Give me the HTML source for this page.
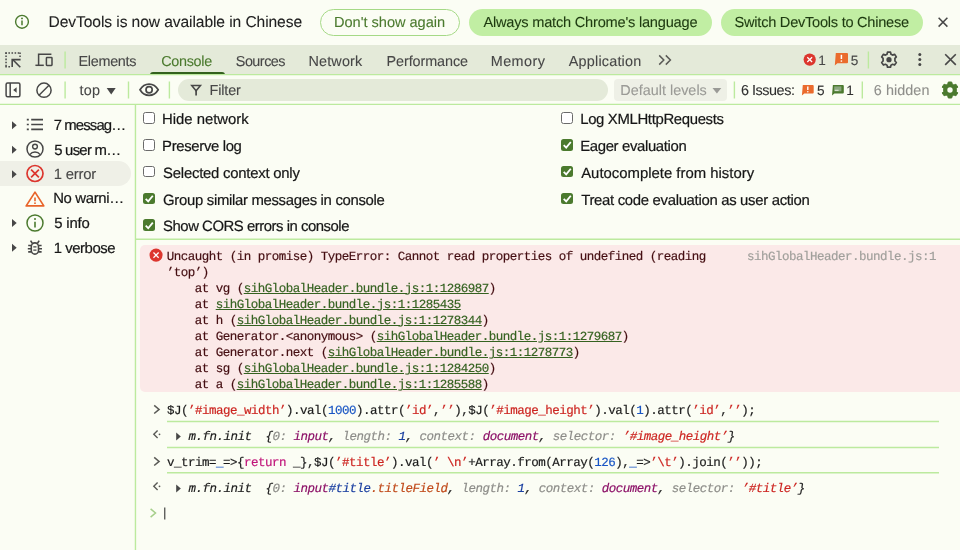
<!DOCTYPE html>
<html>
<head>
<meta charset="utf-8">
<style>
*{box-sizing:border-box;margin:0;padding:0}
html,body{width:960px;height:550px;overflow:hidden;background:#fbfdf4;font-family:"Liberation Sans",sans-serif;color:#1f1f1f;text-rendering:geometricPrecision}
.tx{position:absolute;white-space:nowrap;-webkit-text-stroke:0.2px}
.ab{position:absolute}
svg{position:absolute;overflow:visible}
.pill{position:absolute;top:9px;height:27px;border-radius:13.5px}
.pill.o{border:1px solid #a5d986;background:#fbfdf4}
.pill.f{background:#c1eea3}
#tabbar{position:absolute;left:0;top:45px;width:960px;height:30px;background:#e4ead9}
.vd{position:absolute;width:1.400px;background:#b9e89b;margin-left:-0.200px}
.hd{position:absolute;height:1px;background:#b5e696}
.cb{position:absolute;width:11.8px;height:11.8px;border:1px solid #6a6a6a;border-radius:2.5px;background:#fff}
.cbon{position:absolute;width:11.8px;height:11.8px;border-radius:2.5px;background:#4b7a2e}
.m{position:absolute;font-family:"Liberation Mono",monospace;font-size:12.5px;letter-spacing:-0.5px;white-space:pre;line-height:16.100px;color:#1a1a1a;-webkit-text-stroke:0.180px;text-rendering:geometricPrecision}
.m i{font-style:italic}
.lk{color:#356220;text-decoration:underline;text-decoration-thickness:1px;text-underline-offset:1.300px}
.r{color:#cc2420}.b{color:#1a56c4}.p{color:#8b0f66}.g{color:#8c8c88}.k{color:#c0157a}.o{color:#c04a1a}.n{color:#1a3fa0}
</style>
</head>
<body>
<div id="root" style="position:absolute;left:0;top:0;width:960px;height:550px;will-change:transform">
<!-- infobar -->
<div class="pill o" style="left:320px;width:140px"></div>
<div class="pill f" style="left:469px;width:243px"></div>
<div class="pill f" style="left:721px;width:202px"></div>
<!-- tabbar -->
<div id="tabbar"></div>
<div class="ab" style="left:150px;top:72px;width:75px;height:3px;background:#33611d;border-radius:3px 3px 0 0"></div>
<!-- toolbar -->
<div class="ab" style="left:178px;top:79px;width:430px;height:22px;border-radius:11px;background:#e4ead9"></div>
<div class="ab" style="left:614px;top:79px;width:113px;height:22px;border-radius:4px;background:#eef0e6"></div>
<!-- sidebar -->
<div class="ab" style="left:0;top:161px;width:131px;height:25px;background:#eff0e7;border-radius:0 12.5px 12.5px 0"></div>
<!-- settings -->
<div class="cb" style="left:143.2px;top:112px"></div>
<div class="cb" style="left:143.2px;top:138.8px"></div>
<div class="cb" style="left:143.2px;top:165.6px"></div>
<div class="cbon" style="left:143.2px;top:192.6px"></div>
<div class="cbon" style="left:143.2px;top:219.4px"></div>
<div class="cb" style="left:561.2px;top:112px"></div>
<div class="cbon" style="left:561.2px;top:138.8px"></div>
<div class="cbon" style="left:561.2px;top:165.6px"></div>
<div class="cbon" style="left:561.2px;top:192.6px"></div>

<!-- console -->
<div class="ab" style="left:140px;top:245px;width:820px;height:147px;background:#fbe9e8;border-radius:5px 0 0 5px"></div>
<div class="m" style="left:166.7px;top:248.6px;color:#440d11">Uncaught (in promise) TypeError: Cannot read properties of undefined (reading
’top’)
    at vg (<span class="lk">sihGlobalHeader.bundle.js:1:1286987</span>)
    at <span class="lk">sihGlobalHeader.bundle.js:1:1285435</span>
    at h (<span class="lk">sihGlobalHeader.bundle.js:1:1278344</span>)
    at Generator.&lt;anonymous&gt; (<span class="lk">sihGlobalHeader.bundle.js:1:1279687</span>)
    at Generator.next (<span class="lk">sihGlobalHeader.bundle.js:1:1278773</span>)
    at sg (<span class="lk">sihGlobalHeader.bundle.js:1:1284250</span>)
    at a (<span class="lk">sihGlobalHeader.bundle.js:1:1285588</span>)</div>
<div class="m" style="left:747px;top:248.6px;color:#a09f9b">sihGlobalHeader.bundle.js:1</div>
<div class="m" style="left:167px;top:402.8px">$J(<span class="r">’#image_width’</span>).val(<span class="b">1000</span>).attr(<span class="r">’id’</span>,<span class="r">’’</span>),$J(<span class="r">’#image_height’</span>).val(<span class="b">1</span>).attr(<span class="r">’id’</span>,<span class="r">’’</span>);</div>
<div class="m" style="left:188.5px;top:428.8px"><i>m.fn.init  {<span class="g">0: </span><span class="p">input</span>, <span class="g">length: </span><span class="n">1</span>, <span class="g">context: </span><span class="p">document</span>, <span class="g">selector: </span><span class="r">’#image_height’</span>}</i></div>
<div class="m" style="left:167px;top:454.8px">v_trim=<span class="b">_</span>=&gt;{<span class="k">return</span> _},$J(<span class="r">’#title’</span>).val(<span class="r">’ \n’</span>+Array.from(Array(<span class="b">126</span>),<span class="b">_</span>=&gt;<span class="r">’\t’</span>).join(<span class="r">’’</span>));</div>
<div class="m" style="left:188.5px;top:480.8px"><i>m.fn.init  {<span class="g">0: </span><span class="p">input</span><span class="n">#title</span><span class="o">.titleField</span>, <span class="g">length: </span><span class="n">1</span>, <span class="g">context: </span><span class="p">document</span>, <span class="g">selector: </span><span class="r">’#title’</span>}</i></div>

<div class="tx" style="left:48.60px;top:14px;line-height:17px;height:17px;font-size:15.6px;letter-spacing:-0.088px;color:#1f1f1f;-webkit-text-stroke:0.100px">DevTools is now available in Chinese</div>
<div class="tx" style="left:334.00px;top:15px;line-height:16px;height:16px;font-size:14.6px;letter-spacing:-0.025px;color:#4b7a2e;-webkit-text-stroke:0.100px">Don&#x27;t show again</div>
<div class="tx" style="left:483.40px;top:15px;line-height:16px;height:16px;font-size:14.6px;letter-spacing:-0.209px;color:#1e3a10;-webkit-text-stroke:0.100px">Always match Chrome&#x27;s language</div>
<div class="tx" style="left:734.60px;top:15px;line-height:16px;height:16px;font-size:14.6px;letter-spacing:-0.255px;color:#1e3a10;-webkit-text-stroke:0.100px">Switch DevTools to Chinese</div>
<div class="tx" style="left:78.50px;top:54px;line-height:16px;height:16px;font-size:14.4px;letter-spacing:-0.284px;color:#474747;-webkit-text-stroke:0.100px">Elements</div>
<div class="tx" style="left:161.20px;top:54px;line-height:16px;height:16px;font-size:14.4px;letter-spacing:-0.299px;color:#4b7a2e;-webkit-text-stroke:0.100px">Console</div>
<div class="tx" style="left:235.80px;top:54px;line-height:16px;height:16px;font-size:14.4px;letter-spacing:-0.516px;color:#474747;-webkit-text-stroke:0.100px">Sources</div>
<div class="tx" style="left:308.50px;top:54px;line-height:16px;height:16px;font-size:14.4px;letter-spacing:0.153px;color:#474747;-webkit-text-stroke:0.100px">Network</div>
<div class="tx" style="left:386.50px;top:54px;line-height:16px;height:16px;font-size:14.4px;letter-spacing:-0.088px;color:#474747;-webkit-text-stroke:0.100px">Performance</div>
<div class="tx" style="left:490.70px;top:54px;line-height:16px;height:16px;font-size:14.4px;letter-spacing:0.465px;color:#474747;-webkit-text-stroke:0.100px">Memory</div>
<div class="tx" style="left:568.80px;top:54px;line-height:16px;height:16px;font-size:14.4px;letter-spacing:0.200px;color:#474747;-webkit-text-stroke:0.100px">Application</div>
<div class="tx" style="left:818.20px;top:53px;line-height:15px;height:15px;font-size:13.6px;letter-spacing:0.000px;color:#474747;-webkit-text-stroke:0.100px">1</div>
<div class="tx" style="left:850.70px;top:53px;line-height:15px;height:15px;font-size:13.6px;letter-spacing:0.000px;color:#474747;-webkit-text-stroke:0.100px">5</div>
<div class="tx" style="left:79.40px;top:83px;line-height:16px;height:16px;font-size:14.4px;letter-spacing:0.299px;color:#474747;-webkit-text-stroke:0.100px">top</div>
<div class="tx" style="left:209.50px;top:83px;line-height:16px;height:16px;font-size:14.4px;letter-spacing:-0.117px;color:#474747;-webkit-text-stroke:0.100px">Filter</div>
<div class="tx" style="left:620.30px;top:83px;line-height:16px;height:16px;font-size:14.4px;letter-spacing:0.008px;color:#9a9a96;-webkit-text-stroke:0.100px">Default levels</div>
<div class="tx" style="left:741.00px;top:83px;line-height:16px;height:16px;font-size:14.4px;letter-spacing:-0.462px;color:#303030;-webkit-text-stroke:0.100px">6 Issues:</div>
<div class="tx" style="left:817.00px;top:83px;line-height:15px;height:15px;font-size:13.6px;letter-spacing:0.000px;color:#303030;-webkit-text-stroke:0.100px">5</div>
<div class="tx" style="left:846.20px;top:83px;line-height:15px;height:15px;font-size:13.6px;letter-spacing:0.000px;color:#303030;-webkit-text-stroke:0.100px">1</div>
<div class="tx" style="left:873.80px;top:83px;line-height:16px;height:16px;font-size:14.4px;letter-spacing:0.055px;color:#8f8f8b;-webkit-text-stroke:0.100px">6 hidden</div>
<div class="tx" style="left:53.70px;top:118px;line-height:16px;height:16px;font-size:14.9px;letter-spacing:-0.882px;color:#161616">7 messag…</div>
<div class="tx" style="left:54.20px;top:143px;line-height:16px;height:16px;font-size:14.9px;letter-spacing:-0.741px;color:#161616">5 user m…</div>
<div class="tx" style="left:53.70px;top:167px;line-height:16px;height:16px;font-size:14.9px;letter-spacing:-0.216px;color:#474747;-webkit-text-stroke:0.100px">1 error</div>
<div class="tx" style="left:53.20px;top:191px;line-height:16px;height:16px;font-size:14.9px;letter-spacing:-0.344px;color:#161616">No warni…</div>
<div class="tx" style="left:54.20px;top:216px;line-height:16px;height:16px;font-size:14.9px;letter-spacing:-0.169px;color:#161616">5 info</div>
<div class="tx" style="left:53.70px;top:241px;line-height:16px;height:16px;font-size:14.9px;letter-spacing:-0.439px;color:#161616">1 verbose</div>
<div class="tx" style="left:162.10px;top:112px;line-height:16px;height:16px;font-size:14.9px;letter-spacing:-0.032px;color:#161616">Hide network</div>
<div class="tx" style="left:162.10px;top:139px;line-height:16px;height:16px;font-size:14.9px;letter-spacing:-0.346px;color:#161616">Preserve log</div>
<div class="tx" style="left:163.10px;top:166px;line-height:16px;height:16px;font-size:14.9px;letter-spacing:-0.240px;color:#161616">Selected context only</div>
<div class="tx" style="left:163.10px;top:193px;line-height:16px;height:16px;font-size:14.9px;letter-spacing:-0.311px;color:#161616">Group similar messages in console</div>
<div class="tx" style="left:163.10px;top:219px;line-height:16px;height:16px;font-size:14.9px;letter-spacing:-0.471px;color:#161616">Show CORS errors in console</div>
<div class="tx" style="left:580.20px;top:112px;line-height:16px;height:16px;font-size:14.9px;letter-spacing:-0.337px;color:#161616">Log XMLHttpRequests</div>
<div class="tx" style="left:580.20px;top:139px;line-height:16px;height:16px;font-size:14.9px;letter-spacing:-0.345px;color:#161616">Eager evaluation</div>
<div class="tx" style="left:581.20px;top:166px;line-height:16px;height:16px;font-size:14.9px;letter-spacing:-0.001px;color:#161616">Autocomplete from history</div>
<div class="tx" style="left:581.20px;top:193px;line-height:16px;height:16px;font-size:14.9px;letter-spacing:-0.309px;color:#161616">Treat code evaluation as user action</div>
<svg width="960" height="550" style="left:0;top:0" viewBox="0 0 960 550" fill="none" stroke-linecap="butt">
<!-- divider lines -->
<g stroke="#bcea9e" stroke-width="1.400">
<path d="M0 74.600H960M0 104.400H960M136 239.300H960"/>
<path d="M135.450 105V550"/>
<path d="M65.100 51.400V68.600M868.400 51.400V68.600"/>
<path d="M65.100 81.400V98.600M128.500 81.400V98.600M169.400 81.400V98.600M734.400 81.400V98.600M862.300 81.400V98.600"/>
<path d="M167 421.500H939M167 447.500H939M167 472.700H939"/>
</g>
<!-- checkmarks -->
<g stroke="#fff" stroke-width="1.8" fill="none">
<path d="M145.7 198.9l2.5 2.5 4.6-5.6"/>
<path d="M145.7 225.7l2.5 2.5 4.6-5.6"/>
<path d="M563.7 145.1l2.5 2.5 4.6-5.6"/>
<path d="M563.7 171.9l2.5 2.5 4.6-5.6"/>
<path d="M563.7 198.9l2.5 2.5 4.6-5.6"/>
</g>
<!-- infobar info icon -->
<circle cx="22" cy="21.8" r="6.4" stroke="#4b7a2e" stroke-width="1.4"/>
<path d="M22 20.6v4.6" stroke="#4b7a2e" stroke-width="1.5"/>
<circle cx="22" cy="18.4" r="0.95" fill="#4b7a2e"/>
<!-- infobar close -->
<path d="M938.6 17.8l8.8 8.8M947.4 17.8l-8.8 8.8" stroke="#474747" stroke-width="1.5"/>
<!-- inspect icon -->
<g stroke="#474747" stroke-width="1.5">
<path d="M5.3 53.1H20.8" stroke-dasharray="1.55 1.55"/>
<path d="M6.05 52.4V67.6" stroke-dasharray="1.55 1.55" stroke-dashoffset="0"/>
<path d="M20.05 52.4V57.4" stroke-dasharray="1.55 1.55"/>
<path d="M5.3 66.85H10.3" stroke-dasharray="1.55 1.55"/>
<path d="M20.3 67.2L12.9 59.8" stroke-width="1.6"/>
<path d="M12.2 67V59.6H20.6" stroke-width="1.6"/>
</g>
<!-- device icon -->
<g stroke="#474747" stroke-width="1.5">
<path d="M35.4 65.3H43.8"/>
<path d="M38.6 65.3V54.2H51.4"/>
<rect x="46.4" y="57.6" width="5.6" height="7.8" rx="0.6"/>
</g>
<!-- more tabs chevrons -->
<path d="M659.2 55.4l4.6 4.6-4.6 4.6M665.8 55.4l4.6 4.6-4.6 4.6" stroke="#5a5a56" stroke-width="1.5"/>
<!-- error count icon -->
<circle cx="809.7" cy="59.6" r="6.1" fill="#dc362e"/>
<path d="M807.300 57.200l4.800 4.800M812.100 57.200l-4.800 4.800" stroke="#fff" stroke-width="1.250"/>
<!-- issue icon orange (tabbar) -->
<path d="M835.8 53h11.2a1 1 0 0 1 1 1v8.2a1 1 0 0 1-1 1h-9.6l-2.6 2.4z" fill="#ea6b2d"/>
<path d="M841.4 54.8v4.2" stroke="#fff" stroke-width="1.5"/><circle cx="841.4" cy="61" r="0.85" fill="#fff"/>
<!-- gear outline -->
<g transform="translate(889 59.700) scale(0.940)">
<path d="M-1.600 -8h3.200l.5 2.200 1.700.9 2.100-.8 1.900 2.700-1.500 1.600v2.800l1.500 1.600-1.900 2.700-2.100-.8-1.700.9-.5 2.200h-3.200l-.5-2.200-1.700-.9-2.100.8-1.900-2.700 1.500-1.600v-2.800l-1.500-1.600 1.900-2.700 2.100.8 1.700-.9z" stroke="#474747" stroke-width="1.800" stroke-linejoin="round"/>
<circle r="2.800" fill="#474747"/>
</g>
<!-- kebab -->
<circle cx="919.8" cy="54.6" r="1.5" fill="#474747"/><circle cx="919.8" cy="59.6" r="1.5" fill="#474747"/><circle cx="919.8" cy="64.5" r="1.5" fill="#474747"/>
<!-- close devtools -->
<path d="M945.2 54.3l10.6 10.6M955.8 54.3l-10.6 10.6" stroke="#474747" stroke-width="1.6"/>
<!-- sidebar toggle -->
<g stroke="#474747" stroke-width="1.5">
<rect x="6.1" y="83.1" width="13.8" height="13.6" rx="1.5"/>
<path d="M10.2 83.1V96.7"/>
</g>
<path d="M16.6 87.2v5.6l-3.4-2.8z" fill="#474747"/>
<!-- clear -->
<circle cx="44" cy="90.2" r="7.1" stroke="#474747" stroke-width="1.5"/>
<path d="M39 95.2L49 85.2" stroke="#474747" stroke-width="1.5"/>
<!-- top dropdown triangle -->
<path d="M106.700 88h9l-4.500 6.400z" fill="#474747"/>
<!-- eye -->
<path d="M140 89.800c2.300-3.900 5.500-5.600 9.100-5.600s6.800 1.700 9.100 5.600c-2.300 3.900-5.500 5.600-9.100 5.600s-6.800-1.700-9.100-5.600z" stroke="#474747" stroke-width="1.700"/>
<circle cx="149.100" cy="89.800" r="3.100" stroke="#474747" stroke-width="1.700"/>
<!-- funnel -->
<path d="M191.700 85.500h8.800l-4.400 5.300z" stroke="#474747" stroke-width="1.500" stroke-linejoin="miter"/>
<path d="M196.100 90.200v5.200" stroke="#474747" stroke-width="1.700"/>
<!-- default levels triangle -->
<path d="M712.500 88h8.800l-4.400 5.500z" fill="#9a9a96"/>
<!-- issue icon orange (toolbar) -->
<path d="M802.8 85h10a.9.9 0 0 1 .9.900v6.700a.9.900 0 0 1-.900.900h-8.500l-2.400 2.100z" fill="#ea6b2d"/>
<path d="M807.800 86.500v3.500" stroke="#fff" stroke-width="1.400"/><circle cx="807.800" cy="91.800" r="0.800" fill="#fff"/>
<!-- issue icon green (toolbar) -->
<path d="M832.900 85h10a.9.900 0 0 1 .900.900v6.700a.9.900 0 0 1-.900.900h-8.500l-2.400 2.100z" fill="#4b7a2e"/>
<rect x="834.200" y="86.400" width="7.200" height="4.900" fill="#8aa67d"/>
<path d="M834.800 90.300h3.800" stroke="#e6eedf" stroke-width="1"/>
<!-- green gear filled -->
<g transform="translate(950 90)">
<path d="M-1.700 -8h3.400l.5 2.100 1.700.9 2-.8 1.900 2.900-1.500 1.500v2.800l1.500 1.500-1.900 2.900-2-.8-1.700.9-.5 2.100h-3.400l-.5-2.100-1.700-.9-2 .8-1.900-2.900 1.500-1.500v-2.800l-1.500-1.500 1.900-2.900 2 .8 1.700-.9z" fill="#4b7a2e" stroke="#4b7a2e" stroke-width="1" stroke-linejoin="round"/>
<circle r="2.700" fill="#fbfdf4"/>
</g>
<!-- sidebar expand triangles -->
<g fill="#474747">
<path d="M12 121.200l4.700 4.000-4.700 4.000z"/>
<path d="M12 145.700l4.700 4.000-4.700 4.000z"/>
<path d="M12 170.200l4.700 4.000-4.700 4.000z"/>
<path d="M12 219l4.700 4.000-4.700 4.000z"/>
<path d="M12 243.700l4.700 4.000-4.700 4.000z"/>
</g>
<!-- list icon -->
<g stroke="#474747" stroke-width="1.600">
<path d="M26.800 119.600h2M26.800 124.500h2M26.800 129.400h2M31.200 119.600h11.800M31.200 124.500h11.800M31.200 129.400h11.800"/>
</g>
<!-- user icon -->
<circle cx="35" cy="149" r="8" stroke="#474747" stroke-width="1.500"/>
<circle cx="35" cy="146.600" r="2.400" stroke="#474747" stroke-width="1.400"/>
<path d="M29.800 154.600c1.400-1.900 3.200-2.600 5.200-2.600s3.800.7 5.200 2.600" stroke="#474747" stroke-width="1.400"/>
<!-- error outline icon -->
<circle cx="35" cy="173.500" r="8" stroke="#dc362e" stroke-width="1.700"/>
<path d="M31.100 169.600l7.800 7.800M38.900 169.600l-7.800 7.800" stroke="#dc362e" stroke-width="1.700"/>
<!-- warning triangle -->
<path d="M35 192.100l8.800 13.800h-17.600z" stroke="#e8642a" stroke-width="1.700" stroke-linejoin="round"/>
<path d="M35 197.400v3.800" stroke="#e8642a" stroke-width="1.600"/><circle cx="35" cy="203.200" r="0.900" fill="#e8642a"/>
<!-- info icon -->
<circle cx="35" cy="223" r="8" stroke="#4b7a2e" stroke-width="1.500"/>
<path d="M35 221.800v5.600" stroke="#4b7a2e" stroke-width="1.600"/><circle cx="35" cy="219" r="1" fill="#4b7a2e"/>
<!-- bug icon -->
<g stroke="#474747" stroke-width="1.600" fill="none">
<rect x="31.300" y="242.900" width="7.200" height="11.200" rx="3.600"/>
<path d="M32.300 243.300l-1.700-2.700M37.500 243.300l1.700-2.700M28.200 245.500h3M38.600 245.500h3M27.800 248.700h3.400M38.600 248.700h3.400M28.200 251.900h3M38.600 251.900h3"/>
<path d="M33.300 246.900h3.200M33.300 250.100h3.200" stroke-width="1.200"/>
</g>
<!-- console error icon -->
<circle cx="156.050" cy="255.100" r="6.550" fill="#dc362e"/>
<path d="M153.450 252.500l5.200 5.200M158.650 252.500l-5.200 5.200" stroke="#fff" stroke-width="1.250"/>
<!-- console chevrons -->
<path d="M154.200 405.300l4.900 4.100-4.900 4.100" stroke="#5a5a56" stroke-width="1.500"/>
<path d="M154.200 457.300l4.900 4.100-4.900 4.100" stroke="#5a5a56" stroke-width="1.500"/>
<path d="M150.600 508.900l4.900 4.100-4.900 4.100" stroke="#a5cf8a" stroke-width="1.500"/>
<!-- return icons -->
<path d="M157.600 430.600l-3.800 3.700 3.800 3.700" stroke="#5a5a56" stroke-width="1.400"/><circle cx="159.500" cy="434.300" r="0.900" fill="#5a5a56"/>
<path d="M157.600 482.600l-3.800 3.700 3.800 3.700" stroke="#5a5a56" stroke-width="1.400"/><circle cx="159.500" cy="486.300" r="0.900" fill="#5a5a56"/>
<!-- expand triangles -->
<path d="M176.200 432.400l4.600 4-4.600 4z" fill="#474747"/>
<path d="M176.200 484.400l4.600 4-4.600 4z" fill="#474747"/>
<!-- cursor -->
<path d="M164.800 507.500v12" stroke="#1f1f1f" stroke-width="1"/>
</svg>

</div>
</body>
</html>
